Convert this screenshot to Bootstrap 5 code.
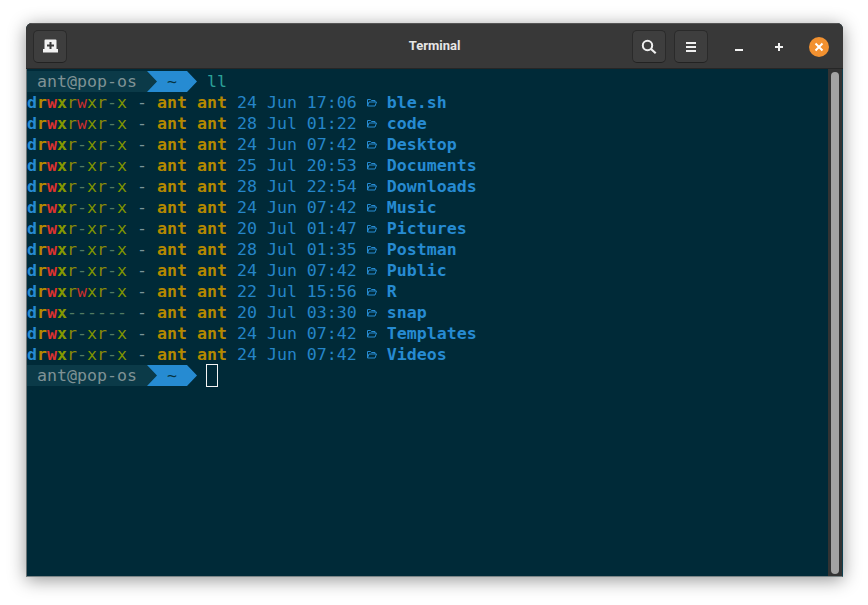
<!DOCTYPE html>
<html lang="en"><head><meta charset="utf-8"><title>Terminal</title>
<link href="https://cdn.jsdelivr.net/npm/bootstrap@5.3.0/dist/css/bootstrap.min.css" rel="stylesheet">
<style>
html,body{height:100%;background:#fff;overflow:hidden}
.stage{padding:23px 25px 28px 26px;height:605px}
.win{height:554px;border-radius:6px 6px 0 0;box-shadow:0 3px 18px rgba(0,0,0,.42);overflow:hidden;background:#002a38}
.hdr{height:46px;flex:none;background:#383838;padding:6px 4px 0 7px;border-bottom:1px solid #262626;border-top:1px solid #555}
.hdr-side{flex:1 1 0}
.hdr-title{font:700 13px Roboto,sans-serif;color:#e6e6e6;padding:8px 3px 0 0}
.tb-btn{width:34px;height:33px;padding:0;background:#3e3e3e;border:1px solid #2a2a2a;border-bottom-color:#222;border-radius:5px;color:#eee}
.tb-gap{gap:8px}
.ctls{margin-left:3px;height:33px}
.ctl{width:40px;height:33px}
.close-dot{width:20px;height:20px;border-radius:50%;background:#f29130}
.term{min-height:0;background:#002a38;border-left:1px solid #6a7376;border-bottom:1px solid #7b8587;border-right:1px solid #0f4050}
.scr{flex:1;min-width:0;padding-top:2px;font-family:"DejaVu Sans Mono",monospace;font-size:16.6px;line-height:21px;color:#2585c8;white-space:pre;font-variant-ligatures:none}
.ln{height:21px;display:flex}
.ln>span{flex:none}
.seg{width:120px;background:#0b3a48;color:#7f9295;padding-left:10px}
.arw{width:50px;background:linear-gradient(#0b3a48,#0b3a48) left/11px 100% no-repeat}
.arw-fill{display:block;height:21px;background:#268bd2;color:#063340;text-align:center;clip-path:polygon(0 0,40px 0,50px 50%,40px 100%,0 100%,10px 50%)}
.cmd{color:#2aa198;padding-left:10px}
.cur{width:12px;height:23px;margin:-1px 0 0 9px;border:1.5px solid #f4f4f4}
.b{font-weight:700}
.nm{color:#268bd2}
.y{color:#b58900}.r{color:#dc322f}.g{color:#859900}.k{color:#7b9498}
.rd{color:#8a8a08}.wr{color:#c9302d}.xd{color:#7f9300}.ds{color:#527a62}
.cell{width:10px;display:flex;align-items:center;height:21px}
.gut{width:14px;flex:none;background:#333;padding:3px 3px 2px}
.thumb{height:100%;background:#a4a4a4;border-radius:5px}
</style></head>
<body>
<div class="stage"><div class="win d-flex flex-column">
<div class="hdr d-flex align-items-start">
  <div class="hdr-side d-flex">
  <button class="btn tb-btn d-flex align-items-center justify-content-center" type="button" aria-label="New tab">
    <svg width="17" height="15" viewBox="0 0 17 15"><path fill="#f2f2f2" d="M3.5 0.5h10a1 1 0 0 1 1 1V10H16v3.5H1V10h1.500V1.500a1 1 0 0 1 1-1z"/><path stroke="#3a3a3a" stroke-width="2" d="M8.500 3v7M5 6.500h7"/></svg>
  </button>
  </div>
  <div class="hdr-title text-center">Terminal</div>
  <div class="hdr-side d-flex align-items-start justify-content-end tb-gap">
    <button class="btn tb-btn d-flex align-items-center justify-content-center" type="button" aria-label="Search">
      <svg width="16" height="16" viewBox="0 0 16 16" fill="none" stroke="#efefef"><circle cx="6.500" cy="6.500" r="4.700" stroke-width="2"/><path d="M10 10l4.700 4.300" stroke-width="2.200"/></svg>
    </button>
    <button class="btn tb-btn d-flex align-items-center justify-content-center" type="button" aria-label="Menu">
      <svg width="12" height="12" viewBox="0 0 12 12" fill="#efefef"><rect x="1" y="1" width="10" height="2"/><rect x="1" y="5" width="10" height="2"/><rect x="1" y="9" width="10" height="2"/></svg>
    </button>
    <div class="ctls d-flex align-items-center" >
      <div class="ctl d-flex align-items-center justify-content-center"><svg width="10" height="10" viewBox="0 0 10 10"><rect x="1" y="7" width="8" height="2" fill="#f2f2f2"/></svg></div>
      <div class="ctl d-flex align-items-center justify-content-center"><svg width="10" height="10" viewBox="0 0 10 10" fill="#f2f2f2"><rect x="1" y="4" width="8" height="2"/><rect x="4" y="1" width="2" height="8"/></svg></div>
      <div class="ctl d-flex align-items-center justify-content-center"><div class="close-dot d-flex align-items-center justify-content-center"><svg width="10" height="10" viewBox="0 0 10 10" stroke="#fff" stroke-width="2"><path d="M1.500 1.500l7 7M8.500 1.500l-7 7"/></svg></div></div>
    </div>
  </div>
</div>
<div class="term flex-grow-1 d-flex">
<div class="scr" id="scr"></div>
<div class="gut"><div class="thumb"></div></div>
</div>
</div></div>
<script>
const rows=[["rwxr-x","24 Jun 17:06","ble.sh"],["rwxr-x","28 Jul 01:22","code"],["r-xr-x","24 Jun 07:42","Desktop"],["r-xr-x","25 Jul 20:53","Documents"],["r-xr-x","28 Jul 22:54","Downloads"],["r-xr-x","24 Jun 07:42","Music"],["r-xr-x","20 Jul 01:47","Pictures"],["r-xr-x","28 Jul 01:35","Postman"],["r-xr-x","24 Jun 07:42","Public"],["rwxr-x","22 Jul 15:56","R"],["------","20 Jul 03:30","snap"],["r-xr-x","24 Jun 07:42","Templates"],["r-xr-x","24 Jun 07:42","Videos"]];
const cls={r:'rd',w:'wr',x:'xd','-':'ds'};
const folder='<span class="cell"><svg width="10" height="9" viewBox="0 0 10 9" fill="none" stroke="#268bd2" stroke-width="1"><path d="M.5 8V1.500h3l1 1h3.500V4M.5 8l1.500-4h7.500L8 8z"/></svg></span>';
const prompt=c=>'<div class="ln"><span class="seg">ant@pop-os</span><span class="arw"><span class="arw-fill">~</span></span>'+c+'</div>';
let h=prompt('<span class="cmd">ll</span>');
for(const [p,d,n] of rows){
 const perm=[...p].map(c=>'<span class="'+cls[c]+'">'+c+'</span>').join('');
 h+='<div class="ln"><span><span class="b nm">d</span><span class="b y">r</span><span class="b r">w</span><span class="b g">x</span>'+perm+' <span class="k">-</span> <span class="b y">ant ant</span> '+d+' </span>'+folder+'<span> <span class="b nm">'+n+'</span></span></div>';
}
h+=prompt('<span class="cur"></span>');
document.getElementById('scr').innerHTML=h;
</script>
<script src="https://cdn.jsdelivr.net/npm/bootstrap@5.3.0/dist/js/bootstrap.bundle.min.js"></script>
</body></html>
